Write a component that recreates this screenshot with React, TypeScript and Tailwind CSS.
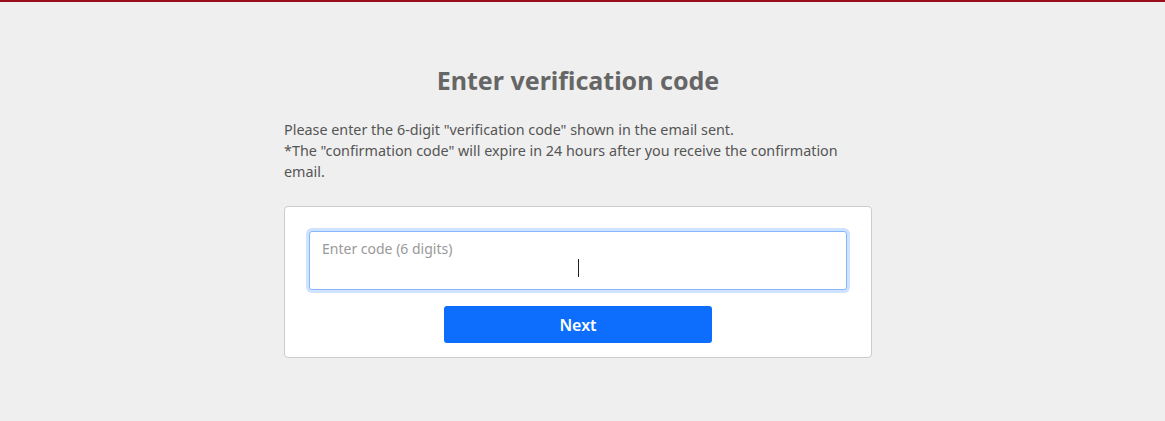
import React from "react";

export default function App() {
  return (
    <div className="min-h-[421px] bg-[#efefef] border-t-2 border-[#9a0c1c] pr-[9px]" style={{ fontFamily: '"Noto Sans", "Open Sans", sans-serif' }}>
      <div className="w-[588px] mx-auto pt-[60px]">
        <h1 className="text-center text-[25px] font-bold text-[#666666] leading-[36px]">Enter verification code</h1>
        <p className="mt-[21px] text-[14.35px] leading-[21px] text-[#555555]">
          Please enter the 6-digit "verification code" shown in the email sent.
          <br />
          *The "confirmation code" will expire in 24 hours after you receive the confirmation email.
        </p>
        <div className="mt-[24px] bg-white border border-[#cccccc] rounded-[4px] px-[24px] pt-[24px] pb-[14px]">
          <div className="relative h-[59px] border border-[#86b7fe] rounded-[3px] shadow-[0_0_0_3px_rgba(13,110,253,0.2)] bg-white">
            <span className="absolute left-[12px] top-[6px] text-[14px] text-[#999999]">Enter code (6 digits)</span>
            <span className="absolute left-[268px] top-[27px] w-px h-[18px] bg-[#222]" />
          </div>
          <div className="flex justify-center mt-[16px]">
            <button className="w-[268px] h-[37px] bg-[#0d6efd] text-white text-[16px] font-semibold rounded-[3px]">Next</button>
          </div>
        </div>
      </div>
    </div>
  );
}
